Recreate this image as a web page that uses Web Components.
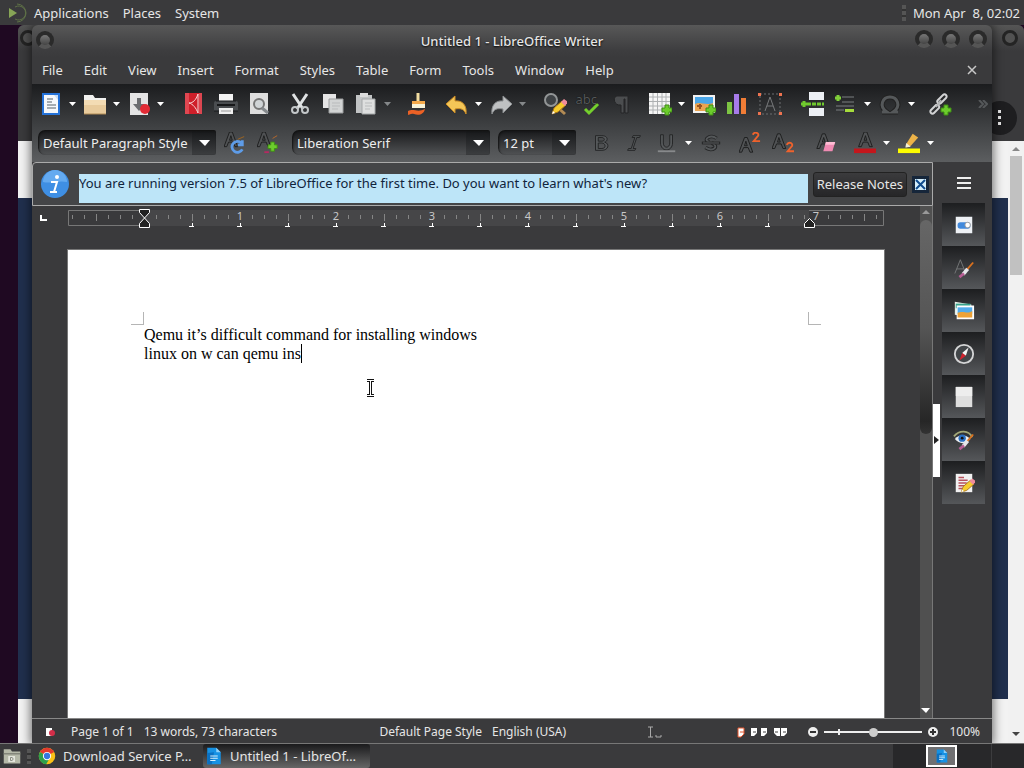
<!DOCTYPE html>
<html lang="en">
<head>
<meta charset="utf-8">
<meta name="viewport" content="width=device-width, initial-scale=1">
<title>Untitled 1 - LibreOffice Writer</title>
<style>
    body {
        margin: 0;
        font: 13px/20px "Noto Sans", "Liberation Sans", sans-serif;
        color: #e6e6e6;
        background: #1f0922;
        overflow: hidden;
    }
</style>
</head>
<body>

<desktop-shell>
    <top-panel slot="top"></top-panel>
    <browser-window></browser-window>
    <writer-window heading="Untitled 1 - LibreOffice Writer">
        <menu-bar slot="menu" items="File,Edit,View,Insert,Format,Styles,Table,Form,Tools,Window,Help"></menu-bar>
        <tool-bar slot="tools" kind="standard"></tool-bar>
        <tool-bar slot="tools" kind="formatting"></tool-bar>
        <info-bar slot="info" action="Release Notes">You are running version 7.5 of LibreOffice for the first time. Do you want to learn what's new?</info-bar>
        <doc-ruler slot="ruler"></doc-ruler>
        <doc-page slot="page">
            <span>Qemu it’s difficult command for installing windows</span>
            <span>linux on w can qemu ins</span>
        </doc-page>
        <side-bar slot="side"></side-bar>
        <status-bar slot="status"></status-bar>
    </writer-window>
    <task-bar slot="bottom"></task-bar>
</desktop-shell>

<script>
const plus = (x, y) => `<path d="M${x + 3} ${y}h4v3h3v4h-3v3h-4v-3h-3v-4h3z" fill="#6ccc2c" stroke="#3f8d15"/>`;
const outlineA = (x, y) => `<path d="M${x} ${y + 16}l6-16h3l6 16h-3l-2-5h-5l-2 5zM${x + 6} ${y + 9}h3l-1.500-5z" fill="#505254" stroke="#1b1c1d"/>`;
const bluePage = '<path d="M3 1h18v22H3z" fill="#2472d8"/><path d="M5 3h14v18H5z" fill="#f5f8fb"/>';
const brush = '<path d="M22 6l-7 8" stroke="#d9711f" stroke-width="2"/><path d="M16 13l-5 6" stroke="#e6e6ea" stroke-width="4"/><path d="M12 18l-5 4" stroke="#b75c94" stroke-width="3"/>';
const pencil = '<path d="M9 22l2-6 8-7 4 4-8 7z" fill="#f6cc2d" stroke="#a8741a"/><path d="M18 10l3-3 4 3-3 4z" fill="#ef8c9c"/><path d="M9 22l1-3 2 2z" fill="#fff"/>';

// every icon is drawn on a 24px grid
const ICONS = {
    'new': bluePage + '<path d="M8 7h6M8 10h5M8 13h9M8 16h9" stroke="#8a9299" stroke-width="1.600"/><path d="M15 3h4v5z" fill="#c8dcf4"/>',
    open: '<path d="M1 3h9l2 3h11v4H1z" fill="#f2f2f0"/><path d="M1 8h22v14H1z" fill="#e8cb9c"/><path d="M1 8h22v5H1z" fill="#f3dcb4"/><path d="M1 22h22" stroke="#b08a55"/>',
    save: '<path d="M3 1h18v22H3z" fill="#e4e4e4"/><path d="M10 6h4v6h4l-6 7-6-7h4z" fill="#6b6d70"/><circle cx="18" cy="17" r="5" fill="#e22b35"/>',
    pdf: '<path d="M4 1h17v21H4z" fill="#cf1f2a"/><path d="M4 1h4v21H4z" fill="#e04751"/><path d="M17 2C15 8 12 11 8 11c4 1 7 5 9 10" stroke="#f7d9da" fill="none"/><path d="M17 2v19" stroke="#f7d9da"/><path d="M18 1h3v21h-3z" fill="#dc4650"/>',
    print: '<path d="M5 2h14v8H5z" fill="#f3f3f3"/><path d="M2 9h20a2 2 0 012 2v8H0v-8a2 2 0 012-2z" fill="#4a4d50"/><path d="M2 9h20M0 19h24" stroke="#17181a"/><path d="M3 13h18" stroke="#17181a" stroke-width="2"/><path d="M5 16h14v6H5z" fill="#efefef"/><path d="M7 19h10" stroke="#999"/>',
    preview: '<path d="M3 1h18v21H3z" fill="#dedede"/><circle cx="12" cy="12" r="5" fill="#d0d4d6" stroke="#777" stroke-width="2"/><path d="M15 16l6 5" stroke="#85898c" stroke-width="3"/>',
    cut: '<path d="M5 2l10 15M19 2L9 17" stroke="#dfe2e3" stroke-width="3"/><circle cx="7" cy="18" r="3" fill="none" stroke="#c3c7c9" stroke-width="2"/><circle cx="17" cy="18" r="3" fill="none" stroke="#c3c7c9" stroke-width="2"/>',
    copy: '<path d="M2 2h13v14H2z" fill="#e5e5e5"/><path d="M8 7h14v14H8z" fill="#d2d4d4" stroke="#9b9d9e"/><path d="M11 11h8M11 14h8M11 17h6" stroke="#b9bbbc"/>',
    paste: '<path d="M2 3h16v18H2z" fill="#c2c4c5"/><path d="M6 1h8v4H6z" fill="#dcdcdc"/><path d="M8 7h13v15H8z" fill="#dedfdf" stroke="#a5a8a9"/><path d="M11 11h7M11 14h7M11 17h5" stroke="#b9bbbc"/>',
    clone: '<path d="M12 1v9" stroke="#f2dda0" stroke-width="3"/><path d="M6 9h13v3H6z" fill="#f4a94a"/><path d="M6 12h13v4H6z" fill="#f8f3d8"/><path d="M2 19c6-3 9 2 17-2-1 5-6 7-11 5-3-1-5 1-6 1z" fill="#ec6125"/>',
    undo: '<path d="M1 12l9-8v5c8-1 12 5 11 13-2-5-5-6-11-5v4z" fill="#f4c657" stroke="#cc8d26"/>',
    redo: '<path d="M23 12l-9-8v5C6 8 2 14 3 22c2-5 5-6 11-5v4z" fill="#bfc1c2" stroke="#8b8e90"/>',
    find: '<circle cx="8" cy="8" r="6" fill="#3e4245" stroke="#929596" stroke-width="2"/><path d="M13 14l9 8" stroke="#b38b54" stroke-width="3"/>' + pencil,
    spell: '<path d="M9 17l4 4 9-9" stroke="#74cf2d" stroke-width="3" fill="none"/>',
    pilcrow: '<path d="M8 4h11v17h-3V7h-1v14h-3v-8c-8 1-8-9-4-9z" fill="#4b4d4f" stroke="#242526"/>',
    table: '<path d="M1 1h21v21H1z" fill="#f5f5f5"/><path d="M1 5h21M1 9.500h21M1 14h21M1 18h21M5 1v21M9.500 1v21M14 1v21M18 1v21" stroke="#adb0b2"/>' + plus(14, 13),
    image: '<path d="M1 3h22v18H1z" fill="#f2f2f2"/><path d="M3 5h18v8H3z" fill="#4aa6e8"/><path d="M3 12c5-3 10 2 18-1v8H3z" fill="#eba451"/><path d="M5 14h5M8 12v5" stroke="#9a531f" stroke-width="2"/>' + plus(14, 13),
    chart: '<path d="M2 10h5v12H2z" fill="#7dc443"/><path d="M9 2h5v20H9z" fill="#a77bea"/><path d="M16 6h5v16h-5z" fill="#f17d36"/>',
    textbox: '<path d="M2 2h20v20H2z" stroke="#6c6e70" fill="none" stroke-dasharray="2 2"/><path d="M0 1h3v3H0zM21 1h3v3h-3zM0 20h3v3H0zM21 20h3v3h-3z" fill="#ee7350"/><path d="M7 19l5-14 5 14M9 14h6" fill="none" stroke="#77797b"/>',
    pagebreak: '<path d="M8 0h15v8H8zM8 16h15v8H8z" fill="#eceff4"/><path d="M6 12h17" stroke="#70ca2e" stroke-width="3" stroke-dasharray="4 1"/><path d="M3 9v6M0 12h6" stroke="#70ca2e" stroke-width="3"/>',
    field: '<path d="M8 5h12M8 10h12M2 14h18M2 18h8" stroke="#7b7e80"/><path d="M4 3v6M1 6h6" stroke="#80cf39" stroke-width="3"/><path d="M11 17h9v3h-9z" fill="#a6dc3c"/>',
    omega: '<path d="M4 20h5c-9-6-4-15 3-15s12 9 3 15h5" fill="none" stroke="#222" stroke-width="5"/><path d="M4 20h5c-9-6-4-15 3-15s12 9 3 15h5" fill="none" stroke="#55585a" stroke-width="3"/>',
    link: '<path d="M8 13l-5 5c-2 2 1 5 3 3l5-5c1-2-1-4-3-3zM15 3l-5 5c-2 2 1 5 3 3l5-5c2-2-1-5-3-3z" fill="none" stroke="#d2d3d4" stroke-width="2"/><path d="M8 15l5-7" stroke="#b2b4b5" stroke-width="2"/>' + plus(13, 13),
    update: outlineA(0, 0) + '<path d="M15 8l7-3" stroke="#a3661e"/><path d="M19 12a6 6 0 10 1 7M20 9v5h-5" fill="none" stroke="#5e9ce8" stroke-width="3"/>',
    create: outlineA(0, 0) + '<path d="M17 7l5-3" stroke="#bd6a28"/><path d="M8 22h5" stroke="#b52a61" stroke-width="2"/>' + plus(12, 11),
    bold: '<path d="M6 4h7c7 0 7 6 3 7 6 2 4 9-3 9H6zm3 2v4h4c4 0 3-4 0-4zm0 6v6h4c5 0 4-6 0-6z" fill="#55585a" stroke="#222324"/>',
    italic: '<path d="M11 4h8l-1 2h-3l-4 12h3l-1 2H5l1-2h3l4-12h-3z" fill="#55585a" stroke="#222324"/>',
    underline: '<path d="M5 3h3v9c0 6 7 6 7 0V3h3v9c0 10-13 10-13 0z" fill="#55585a" stroke="#222324"/><path d="M2 21h19" stroke="#87898b" stroke-width="2"/>',
    strike: '<path d="M18 7c-6-5-16 1-8 4M6 17c7 5 16-1 7-5" fill="none" stroke="#242526" stroke-width="4"/><path d="M18 7c-6-5-16 1-8 4M6 17c7 5 16-1 7-5" fill="none" stroke="#55585a" stroke-width="2"/><path d="M2 12h20" stroke="#202122" stroke-width="3"/><path d="M3 12h18" stroke="#65686a"/>',
    sup: outlineA(0, 6) + '<path d="M15 3c2-4 7-2 6 1l-5 6h7" fill="none" stroke="#ef622c" stroke-width="2"/>',
    sub: outlineA(0, 2) + '<path d="M16 14c2-4 7-2 6 1l-5 6h7" fill="none" stroke="#ef622c" stroke-width="2"/>',
    clear: outlineA(2, 2) + '<path d="M12 11h10l-3 10H9z" fill="#f08bb3"/><path d="M12 11h10l-1 3H11z" fill="#ffbdd5"/>',
    color: outlineA(5, 0) + '<path d="M0 18h24v5H0z" fill="#c4161c"/>',
    highlight: '<path d="M9 13l7-11 6 4-8 9-5 2z" fill="#edb348"/><path d="M9 12l5 4-6 1z" fill="#f3f0d6"/><path d="M0 18h24v5H0z" fill="#fdfc00"/>',
    properties: '<path d="M3 3h18v18H3z" fill="#eef1f5"/><rect x="5" y="9" width="14" height="7" rx="3" fill="#4189dc"/><circle cx="16" cy="12" r="3" fill="#fff" stroke="#999"/>',
    styles: '<path d="M2 18L8 3l6 15M4 13h8" fill="none" stroke="#77797b"/>' + brush,
    gallery: '<path d="M2 2l18 3v14L2 16z" fill="#e6f0e8"/><path d="M3 4h16v5H3z" fill="#38a48d"/><path d="M4 6h19v15H4z" fill="#fff"/><path d="M5 8h16v7H5z" fill="#51aceb"/><path d="M5 14c7-3 10 2 16-2v7H5z" fill="#eda237"/>',
    navigator: '<circle cx="12" cy="12" r="10" fill="#424649" stroke="#d4d5d6" stroke-width="2"/><path d="M17 5l-3 9-4-3z" fill="#f5f5f5"/><path d="M7 19l3-8 4 3z" fill="#d1232e"/>',
    page: '<path d="M3 1h18v22H3z" fill="#dedede"/><path d="M3 1h18v10H3z" fill="#ededed"/>',
    inspector: '<path d="M1 8c6-7 16-7 20 1" fill="none" stroke="#a3a878" stroke-width="2"/><path d="M2 11c5-6 12-5 17 0-5 6-12 6-17 0z" fill="#e8edf2"/><circle cx="10" cy="10" r="4" fill="#2a6fc3"/><circle cx="10" cy="10" r="1.500" fill="#111"/>' + brush,
    changes: '<path d="M3 2h18v20H3z" fill="#f1f1f1"/><path d="M6 6h6M6 9h10M6 12h9M6 15h7M6 18h4" stroke="#b8525d" stroke-width="1.500"/>' + pencil,
    chrome: '<circle cx="12" cy="12" r="11" fill="#fbc116"/><path d="M12 12L2.500 6.500a11 11 0 0119 0z" fill="#e33b2e"/><path d="M12 12L2.500 6.500A11 11 0 0011 23l5-9z" fill="#2da14c"/><circle cx="12" cy="12" r="5.500" fill="#fff"/><circle cx="12" cy="12" r="4.200" fill="#3477e0"/>',
    writer: '<path d="M3 1h12l6 6v16H3z" fill="#1691e3"/><path d="M15 1l6 6h-6z" fill="#8cd0fa"/><path d="M3 8l9-1-3 16H3z" fill="#0a70c2"/><path d="M7 12h10M7 15h10M7 18h7" stroke="#d8effc" stroke-width="1.500"/>',
    files: '<path d="M1 3h9l2 3h11v16H1z" fill="#b5b8a8"/><path d="M1 9h22" stroke="#83857a" stroke-width="2"/><path d="M7 12h9v8H7z" fill="#e4e5dc"/><path d="M10 14v4h2c2-1 2-3 0-4z" fill="none" stroke="#6c6e64"/>'
};

class BaseElement extends HTMLElement {

    constructor() {
        super();

        this.attachShadow({mode: 'open'});
    }

    connectedCallback() {
        this.render();
    }

    render() {
        this.shadowRoot.innerHTML = `<style>${this.styles}</style>${this.template}`;
    }
}

class UiIcon extends BaseElement {

    get styles() {
        return `
            :host { display: block; width: var(--icon-size, 24px); height: var(--icon-size, 24px); flex: none; position: relative; }
            svg { display: block; width: 100%; height: 100%; }
            span { position: absolute; left: 0; top: 1px; color: #55585a; font-size: 13px; line-height: 12px; text-shadow: 0 0 1px #000; }
        `;
    }

    get template() {
        const name = this.getAttribute('name');
        // the spell check icon carries a small word under its tick
        const word = name === 'spell' ? '<span>abc</span>' : '';
        return `${word}<svg viewBox="0 0 24 24" fill="none" aria-hidden="true">${ICONS[name] || ''}</svg>`;
    }
}

class DesktopShell extends BaseElement {

    get styles() {
        return `
            :host { display: flex; flex-direction: column; height: 100vh; }
            main { position: relative; flex: 1; min-height: 0; overflow: hidden; }
        `;
    }

    get template() {
        return `<slot name="top"></slot><main><slot></slot></main><slot name="bottom"></slot>`;
    }
}

class TopPanel extends BaseElement {

    get styles() {
        return `
            :host { display: flex; align-items: center; height: 25px; background: #3a3a3c; }
            nav { display: flex; flex: 1; gap: 14px; align-items: center; }
            svg { width: 22px; height: 20px; margin: 0 -8px 0 6px; }
            button { all: unset; }
            i { width: 4px; height: 16px; margin-right: 7px; background: repeating-linear-gradient(#555 0 4px, #333 4px 6px); }
            time { margin-right: 4px; white-space: pre; }
        `;
    }

    get template() {
        return `
            <nav>
                <svg viewBox="0 0 22 20" fill="none"><path d="M3 5l8 5-8 5z" fill="#87a556"/><path d="M9 4a7 7 0 110 12M11 1a9 9 0 110 18" stroke="#5e7047"/></svg>
                <button>Applications</button><button>Places</button><button>System</button>
            </nav>
            <i></i><time>Mon Apr  8, 02:02</time>
        `;
    }
}

class BrowserWindow extends BaseElement {

    get styles() {
        return `
            :host { position: absolute; left: 18px; right: 0; top: 0; bottom: 0; display: flex; flex-direction: column; background: #3a3a3c; border-radius: 6px 6px 0 0; overflow: hidden; }
            header { height: 26px; display: flex; justify-content: space-between; align-items: center; padding: 0 6px 0 2px; background: linear-gradient(#555, #3a3a3c); }
            header i { width: 10px; height: 10px; border-radius: 50%; border: 3px solid #242424; background: #525252; }
            .bar { flex: none; height: 90px; display: flex; justify-content: flex-end; align-items: flex-end; }
            button { all: unset; box-sizing: border-box; width: 34px; height: 34px; margin: 0 7px 6px 0; border-radius: 50%; background: #1e1e20; display: grid; place-items: center; }
            .view { flex: 1; display: flex; min-height: 0; }
            .site { flex: 1; display: flex; flex-direction: column; }
            .site div { flex: 1; background: #202f4d; }
            .site::before { content: ""; height: 57px; background: #f2f2f2; }
            .site::after { content: ""; height: 44px; background: #f2f2f2; }
            .scroll { width: 16px; background: #f1f1f1; display: flex; flex-direction: column; align-items: center; gap: 3px; }
            .scroll b { width: 12px; height: 119px; background: #c1c1c1; }
            .scroll svg { width: 10px; height: 12px; }
            .scroll svg:last-child { margin-top: auto; margin-bottom: 3px; }
        `;
    }

    get template() {
        return `
            <header><i></i><i></i></header>
            <div class="bar"><button aria-label="Browser menu"><svg width="6" height="18"><path d="M1 1h3v3H1zM1 7h3v3H1zM1 13h3v3H1z" fill="#e8e8e8"/></svg></button></div>
            <div class="view">
                <div class="site"><div></div></div>
                <div class="scroll"><svg><path d="M1 10l4-4 4 4z" fill="#888"/></svg><b></b><svg><path d="M1 4h8l-4 4z" fill="#444"/></svg></div>
            </div>
        `;
    }
}

class WriterWindow extends BaseElement {

    get styles() {
        return `
            :host { position: absolute; left: 32px; right: 32px; top: 0; bottom: 0; display: flex; flex-direction: column; background: #3a3a3c; border-radius: 6px 6px 0 0; box-shadow: 0 0 10px 2px rgba(0, 0, 0, .5); }
            header { display: grid; grid-template-columns: 80px 1fr 80px; align-items: center; height: 32px; flex: none; border-radius: 6px 6px 0 0; background: linear-gradient(#585858, #3d3d3f 80%, #3a3a3c); }
            h1 { margin: 0; font-size: 13px; font-weight: 500; text-align: center; text-shadow: 0 1px 2px #000; }
            header button { all: unset; width: 10px; height: 10px; border-radius: 50%; border: 4px solid #2a2a2a; border-bottom-color: #555; background: linear-gradient(#777, #444); }
            .left { padding-left: 4px; height: 22px; }
            .right { display: flex; gap: 9px; justify-content: flex-end; height: 22px; padding-right: 5px; }
            .tools { flex: none; background: linear-gradient(#1b1c1e, #3c3e40 50%, #5c5e60); }
            .body { flex: 1; display: flex; min-height: 0; }
            .main { flex: 1; display: flex; flex-direction: column; min-width: 0; }
            .edit { flex: 1; display: flex; min-height: 0; }
            .doc { flex: 1; min-width: 0; overflow: hidden; display: flex; flex-direction: column; align-items: center; position: relative; }
            .scroll { width: 12px; border-right: 1px solid #777; background: #505050; display: flex; flex-direction: column; align-items: center; }
            .scroll b { width: 12px; height: 214px; border-radius: 6px; background: linear-gradient(#666, #555 50%, #262626 94%, #333); }
            .scroll svg { width: 10px; height: 14px; flex: none; }
            .scroll svg:last-child { margin-top: auto; }
            .tab { position: absolute; left: 8px; top: 9px; }
            .pointer { position: absolute; left: 332px; top: 172px; }
        `;
    }

    get template() {
        return `
            <header>
                <div class="left"><button aria-label="Window menu"></button></div>
                <h1>${this.getAttribute('heading')}</h1>
                <div class="right"><button aria-label="Minimize"></button><button aria-label="Maximize"></button><button aria-label="Close"></button></div>
            </header>
            <slot name="menu"></slot>
            <div class="tools"><slot name="tools"></slot></div>
            <div class="body">
                <div class="main">
                    <slot name="info"></slot>
                    <div class="edit">
                        <div class="doc">
                            <svg class="tab" width="8" height="7"><path d="M1 0v5h6" stroke="#fff" stroke-width="2" fill="none"/></svg>
                            <slot name="ruler"></slot>
                            <slot name="page"></slot>
                            <svg class="pointer" width="12" height="20"><path d="M3 2.500h7M6.500 2v15M3 17.500h7" stroke="#111" stroke-width="3" fill="none"/><path d="M3 2.500h7M6.500 2v15M3 17.500h7" stroke="#fff" fill="none"/></svg>
                        </div>
                        <div class="scroll"><svg><path d="M1 8l4-4 4 4z" fill="#999"/></svg><b></b><svg><path d="M0 4h9L5 9z" fill="#fff"/></svg></div>
                    </div>
                </div>
                <slot name="side"></slot>
            </div>
            <slot name="status"></slot>
        `;
    }
}

class MenuBar extends BaseElement {

    get styles() {
        return `
            :host { display: flex; align-items: center; box-sizing: border-box; height: 27px; padding: 0 12px 2px 0; flex: none; }
            button { all: unset; padding: 0 11px 0 10px; }
            .close { margin-left: auto; padding: 0; width: 16px; height: 16px; }
            svg { display: block; }
        `;
    }

    get template() {
        const items = this.getAttribute('items').split(',');
        return `
            ${items.map(item => `<button>${item}</button>`).join('')}
            <button class="close" aria-label="Close document"><svg width="16" height="16"><path d="M4 4l8 8M12 4l-8 8" stroke="#c8c8c8" stroke-width="1.500"/></svg></button>
        `;
    }
}

// "name+" has a drop-down arrow, "name-" a greyed arrow,
// a number is the space between two groups
const TOOLBARS = {
    standard: ['new+', 'open+', 'save+', 10, 'pdf', 'print', 'preview', 8, 'cut', 'copy', 'paste-', 8, 'clone', 6, 'undo+', 'redo-', 10,
        'find', 'spell', 'pilcrow', 6, 'table+', 'image', 'chart', 'textbox', 10, 'pagebreak', 'field+', 'omega+', 6, 'link', 'more'],
    formatting: [4, ['Default Paragraph Style', 178, 'Paragraph style'], 2, 'update', 'create', 8, ['Liberation Serif', 198, 'Font name'], 8,
        ['12 pt', 78, 'Font size'], 8, 'bold', 'italic', 'underline+', 'strike', 6, 'sup', 'sub', 10, 'clear', 6, 'color+', 'highlight+']
};

class ToolBar extends BaseElement {

    get styles() {
        return `
            :host { display: flex; align-items: center; height: 39px; padding-left: 2px; }
            :host([kind="formatting"]) { --icon-size: 22px; }
            button { all: unset; display: grid; place-items: center; width: 33px; height: 32px; flex: none; }
            button.arrow { width: 11px; }
            button.more { margin-left: auto; width: 18px; }
            i { flex: none; }
            select { appearance: none; box-sizing: border-box; height: 25px; margin: 0; padding: 0 24px 0 5px; flex: none; border: 0; border-radius: 7px 2px 2px 7px; color: #eee; font: inherit;
                background: url("data:image/svg+xml,%3Csvg xmlns='http://www.w3.org/2000/svg' width='23' height='25'%3E%3Cpath d='M6 10h11l-5 6z' fill='white'/%3E%3C/svg%3E") right no-repeat,
                    linear-gradient(#161719, #3c3e40) right / 24px 100% no-repeat,
                    linear-gradient(#161719, #292a2c 30%, #505254); box-shadow: inset 1px 1px 2px #111; }
        `;
    }

    item(entry) {
        if (typeof entry === 'number') {
            return `<i style="width: ${entry}px"></i>`;
        }
        if (Array.isArray(entry)) {
            return `<select aria-label="${entry[2]}" style="width: ${entry[1]}px"><option>${entry[0]}</option></select>`;
        }
        if (entry === 'more') {
            return `<button class="more" aria-label="More"><svg width="10" height="8"><path d="M1 0l4 4-4 4M5 0l4 4-4 4" stroke="#55585a" stroke-width="2" fill="none"/></svg></button>`;
        }
        const name = entry.replace(/[+-]$/, '');
        const button = `<button aria-label="${name}"><ui-icon name="${name}"></ui-icon></button>`;
        if (name === entry) {
            return button;
        }
        const fill = entry.endsWith('+') ? '#fff' : '#85888a';
        return `${button}<button class="arrow" aria-label="${name} options"><svg width="7" height="4"><path d="M0 0h7L3.500 4z" fill="${fill}"/></svg></button>`;
    }

    get template() {
        return TOOLBARS[this.getAttribute('kind')].map(entry => this.item(entry)).join('');
    }
}

class InfoBar extends BaseElement {

    get styles() {
        return `
            :host { display: flex; align-items: center; gap: 5px; box-sizing: border-box; height: 44px; padding: 0 3px 0 8px; flex: none; border: 1px solid #aaa; border-radius: 4px 0 0 0; background: #444547; }
            .mark { flex: none; margin-right: 5px; }
            p { flex: 1; margin: 8px 0 0; height: 29px; line-height: 18px; background: #bde5f8; color: #10243c; white-space: nowrap; }
            button { all: unset; }
            .action { box-sizing: border-box; height: 25px; line-height: 23px; padding: 0 3px; border: 1px solid #222; border-radius: 3px; background: linear-gradient(#3b3b3d, #262628); }
            .close { width: 17px; height: 17px; display: grid; place-items: center; background: #16263a; }
        `;
    }

    get template() {
        return `
            <svg class="mark" width="28" height="28"><circle cx="14" cy="14" r="14" fill="#3f8fe4"/><path d="M2 12a12 12 0 0124 0c-8-2-16 2-24 0z" fill="#64aaf0"/><circle cx="16" cy="7" r="2" fill="#fff"/><path d="M10 12h6l-3 10h3M9 22h5" stroke="#fff" stroke-width="2" fill="none"/></svg>
            <p><slot></slot></p>
            <button class="action">${this.getAttribute('action')}</button>
            <button class="close" aria-label="Close infobar"><svg width="13" height="13"><path d="M1 1h11v11H1z" fill="#d5effb"/><path d="M2 2l9 9M11 2l-9 9" stroke="#0f4b8e" stroke-width="2"/></svg></button>
        `;
    }
}

class DocRuler extends BaseElement {

    get styles() {
        return `
            :host { display: block; flex: none; width: 816px; height: 43px; }
            svg { display: block; margin-top: 2px; }
            text { font-size: 11px; fill: #c8c8c8; text-anchor: middle; }
        `;
    }

    get template() {
        const inch = 96;
        const start = 76;
        let marks = '';
        for (let x = 4; x < 814; x += 12) {
            const step = (x - start) / 12;
            if (step === 0) {
                continue;
            }
            if (step > 0 && step % 8 === 0) {
                marks += `<text x="${start + step / 8 * inch}" y="12">${step / 8}</text>`;
            } else {
                const tall = step % 4 === 0 ? 3 : 0;
                marks += `<path d="M${x}.5 ${7 - tall / 3}v${4 + tall}" stroke="#858585"/>`;
            }
        }
        for (let x = start + 48; x < 730; x += 48) {
            marks += `<path d="M${x - 3} 18.500h5M${x}.5 15v4" stroke="#fff"/>`;
        }
        return `
            <svg width="816" height="22">
                <path d="M.5 2.500h815v15H.5z" fill="#3a3a3c" stroke="#777"/>
                <path d="M76 2h665v16H76z" fill="#464648"/>
                ${marks}
                <path d="M71.500 1.500h10v3l-10 11v4h10v-4l-10-11z" fill="#222" stroke="#fff"/>
                <path d="M736.500 19.500v-4l5-5 5 5v4z" fill="#222" stroke="#fff"/>
            </svg>
        `;
    }
}

class DocPage extends BaseElement {

    get styles() {
        return `
            :host { display: block; box-sizing: border-box; width: 818px; flex: 1 0 auto; padding: 62px 63px 0; border: 1px solid #777; border-bottom: 0; background: #fff; color: #000; font: 16px/19px "Liberation Serif", serif; }
            .corners { display: flex; justify-content: space-between; }
            .corners i { width: 12px; height: 12px; border: solid #b5b5b5; border-width: 0 1px 1px 0; }
            .corners i:last-child { border-width: 0 0 1px 1px; }
            .text { margin-left: 13px; }
            ::slotted(span) { display: block; width: max-content; }
            ::slotted(span:last-of-type) { border-right: 1px solid #000; }
        `;
    }

    get template() {
        return `<div class="corners"><i></i><i></i></div><div class="text"><slot></slot></div>`;
    }
}

class SideBar extends BaseElement {

    get styles() {
        return `
            :host { display: flex; width: 59px; flex: none; }
            .grip { align-self: center; width: 7px; height: 73px; background: #fff; display: grid; place-items: center; }
            .deck { display: flex; flex-direction: column; margin-left: 2px; width: 43px; }
            button { all: unset; height: 43px; display: grid; place-items: center; background: linear-gradient(#1d1e20, #55575a); --icon-size: 22px; }
            .menu { height: 41px; background: none; }
        `;
    }

    get template() {
        const decks = ['properties', 'styles', 'gallery', 'navigator', 'page', 'inspector', 'changes'];
        return `
            <div class="grip"><svg width="5" height="8"><path d="M0 0l5 4-5 4z" fill="#222"/></svg></div>
            <div class="deck">
                <button class="menu" aria-label="Sidebar settings"><svg width="14" height="12"><path d="M0 1h14M0 6h14M0 11h14" stroke="#eee" stroke-width="2"/></svg></button>
                ${decks.map(name => `<button aria-label="${name}"><ui-icon name="${name}"></ui-icon></button>`).join('')}
            </div>
        `;
    }
}

class StatusBar extends BaseElement {

    get styles() {
        return `
            :host { display: flex; align-items: center; box-sizing: border-box; height: 25px; flex: none; padding: 2px 12px 0 13px; border-top: 1px solid #888; font-size: 12px; }
            .doc { display: flex; flex: 1; align-items: center; }
            .doc span { margin-right: 10px; }
            .doc svg { margin-right: 14px; }
            .lang { display: flex; gap: 10px; width: 268px; }
            .mode { width: 90px; }
            .views { display: flex; gap: 4px; width: 70px; }
            button { all: unset; display: block; height: 12px; }
            button svg, .doc svg, .mode svg { display: block; }
            input { appearance: none; width: 98px; height: 12px; margin: 0 5px; background: linear-gradient(#eee, #eee) 14px 3px / 2px 6px no-repeat, linear-gradient(#eee, #eee) 0 5px / 100% 2px no-repeat; }
            input::-webkit-slider-thumb { appearance: none; width: 9px; height: 9px; border-radius: 50%; background: #ccc; }
            output { margin-left: 10px; }
        `;
    }

    get template() {
        return `
            <div class="doc">
                <svg width="12" height="10"><path d="M1 1h6v8H1z" fill="#fff"/><circle cx="7" cy="6" r="3" fill="#d22d48"/></svg>
                <span>Page 1 of 1</span><span>13 words, 73 characters</span>
            </div>
            <div class="lang"><span>Default Page Style</span><span>English (USA)</span></div>
            <div class="mode"><svg width="18" height="12"><path d="M1 1h5M3.500 1v10M1 11h5M9 9v2h5V9" stroke="#aaa" fill="none"/></svg></div>
            <div class="views">
                <button aria-label="Single-page view"><svg width="8" height="12"><path d="M1 2h6v6l-3 3H1z" fill="#fff" stroke="#e4572e"/><path d="M3 6h4" stroke="#e4572e"/></svg></button>
                <button aria-label="Multiple-page view"><svg width="18" height="12"><path d="M2 2h6v5L5 10H2zM12 2h6v5l-3 3h-3z" fill="#fff"/><path d="M4 6h3M14 6h3" stroke="#444"/></svg></button>
                <button aria-label="Book view"><svg width="18" height="12"><path d="M3 2h6v8H6L3 7zM10 2h6v5l-3 3h-3z" fill="#fff"/><path d="M4 6h3M12 6h3" stroke="#444"/></svg></button>
            </div>
            <button aria-label="Zoom out"><svg width="12" height="12"><circle cx="6" cy="6" r="5" fill="#eee"/><path d="M3 6h6" stroke="#333" stroke-width="2"/></svg></button>
            <input type="range" min="0" max="100" value="50" aria-label="Zoom">
            <button aria-label="Zoom in"><svg width="12" height="12"><circle cx="6" cy="6" r="5" fill="#eee"/><path d="M3 6h6M6 3v6" stroke="#333" stroke-width="2"/></svg></button>
            <output>100%</output>
        `;
    }
}

class TaskBar extends BaseElement {

    get styles() {
        return `
            :host { display: flex; box-sizing: border-box; height: 25px; border-top: 1px solid #777; background: #3a3a3c; --icon-size: 18px; }
            button { all: unset; display: flex; align-items: center; gap: 7px; box-sizing: border-box; }
            .show { padding: 0 6px 0 3px; }
            .grip { width: 4px; margin: 5px 5px 4px 0; background: repeating-linear-gradient(#555 0 4px, #333 4px 6px); }
            .task { width: 167px; padding: 0 2px; }
            .task span { overflow: hidden; text-overflow: ellipsis; white-space: nowrap; }
            .active { background: linear-gradient(#1a1a1c, #666); border-radius: 3px; }
            .pager { display: flex; margin-left: auto; width: 131px; background: #28282a; }
            .pager div { flex: 1; display: flex; justify-content: flex-end; padding: 1px 34px 1px 0; border-right: 1px solid #3c3c3e; }
            .pager div + div { flex: 0 0 32px; box-sizing: border-box; padding: 0; border: 0; }
            .pager button { width: 31px; border: 2px solid #fff; background: #707072; justify-content: center; --icon-size: 14px; }
        `;
    }

    get template() {
        return `
            <button class="show" aria-label="Files"><ui-icon name="files"></ui-icon></button>
            <div class="grip"></div>
            <button class="task"><ui-icon name="chrome"></ui-icon><span>Download Service P…</span></button>
            <button class="task active"><ui-icon name="writer"></ui-icon><span>Untitled 1 - LibreOf…</span></button>
            <div class="pager"><div><button aria-label="Workspace"><ui-icon name="writer"></ui-icon></button></div><div></div></div>
        `;
    }
}

customElements.define('ui-icon', UiIcon);
customElements.define('desktop-shell', DesktopShell);
customElements.define('top-panel', TopPanel);
customElements.define('browser-window', BrowserWindow);
customElements.define('writer-window', WriterWindow);
customElements.define('menu-bar', MenuBar);
customElements.define('tool-bar', ToolBar);
customElements.define('info-bar', InfoBar);
customElements.define('doc-ruler', DocRuler);
customElements.define('doc-page', DocPage);
customElements.define('side-bar', SideBar);
customElements.define('status-bar', StatusBar);
customElements.define('task-bar', TaskBar);
</script>
</body>
</html>
